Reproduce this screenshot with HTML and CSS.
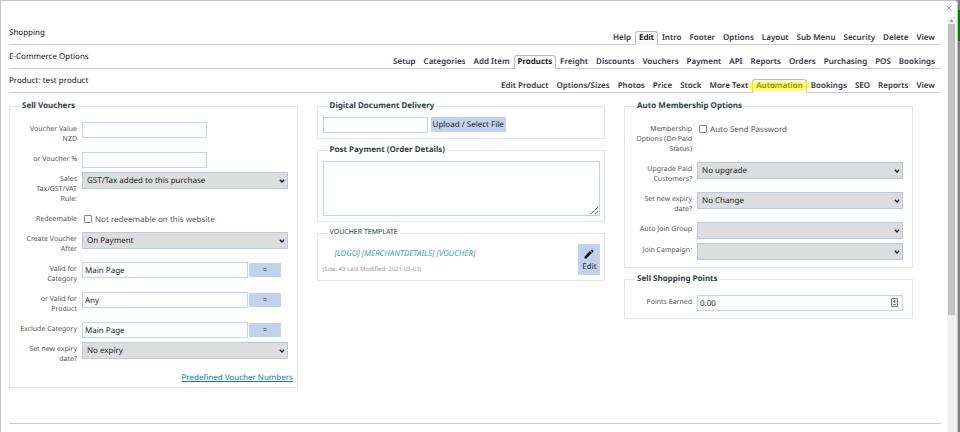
FILE: index.html
```html
<!DOCTYPE html>
<html lang="en">
<head>
    <meta charset="UTF-8">
    <meta name="viewport" content="width=device-width, initial-scale=1.0">
    <title>Product: test product</title>
    <link rel="stylesheet" href="styles.css">
</head>
<body>
    <div class="modal">
        <div class="modal-top">
            <button class="close" type="button" aria-label="Close">
                <svg width="6" height="6" viewBox="0 0 6 6"><path d="M.5 .5l5 5M5.5 .5l-5 5" stroke="#aaa" stroke-width="1" fill="none"/></svg>
            </button>
        </div>

        <div class="modal-body">
            <main class="content">
                <!-- Menus -->
                <header class="bar">
                    <h1>Shopping</h1>
                    <nav class="tabs">
                        <a href="#">Help</a>
                        <a href="#" class="active">Edit</a>
                        <a href="#">Intro</a>
                        <a href="#">Footer</a>
                        <a href="#">Options</a>
                        <a href="#">Layout</a>
                        <a href="#">Sub Menu</a>
                        <a href="#">Security</a>
                        <a href="#">Delete</a>
                        <a href="#">View</a>
                    </nav>
                </header>
                <header class="bar">
                    <h2>E-Commerce Options</h2>
                    <nav class="tabs">
                        <a href="#">Setup</a>
                        <a href="#">Categories</a>
                        <a href="#">Add Item</a>
                        <a href="#" class="active">Products</a>
                        <a href="#">Freight</a>
                        <a href="#">Discounts</a>
                        <a href="#">Vouchers</a>
                        <a href="#">Payment</a>
                        <a href="#">API</a>
                        <a href="#">Reports</a>
                        <a href="#">Orders</a>
                        <a href="#">Purchasing</a>
                        <a href="#">POS</a>
                        <a href="#">Bookings</a>
                    </nav>
                </header>
                <header class="bar">
                    <h2>Product: test product</h2>
                    <nav class="tabs">
                        <a href="#">Edit Product</a>
                        <a href="#">Options/Sizes</a>
                        <a href="#">Photos</a>
                        <a href="#">Price</a>
                        <a href="#">Stock</a>
                        <a href="#">More Text</a>
                        <a href="#" class="active marked">Automation</a>
                        <a href="#">Bookings</a>
                        <a href="#">SEO</a>
                        <a href="#">Reports</a>
                        <a href="#">View</a>
                    </nav>
                </header>

                <form class="columns">
                    <div class="column">
                        <fieldset class="rows">
                            <legend>Sell Vouchers</legend>
                            <div class="row">
                                <label for="value">Voucher Value NZD</label>
                                <input type="text" id="value" class="short">
                            </div>
                            <div class="row">
                                <label for="percent">or Voucher %</label>
                                <input type="text" id="percent" class="short">
                            </div>
                            <div class="row">
                                <label for="tax">Sales Tax/GST/VAT Rule:</label>
                                <select id="tax"><option>GST/Tax added to this purchase</option></select>
                            </div>
                            <div class="row">
                                <span class="label">Redeemable</span>
                                <div class="check">
                                    <input type="checkbox" id="redeem">
                                    <label for="redeem">Not redeemable on this website</label>
                                </div>
                            </div>
                            <div class="row">
                                <label for="create">Create Voucher After</label>
                                <select id="create"><option>On Payment</option></select>
                            </div>
                            <div class="row">
                                <label for="category">Valid for Category</label>
                                <div class="picker">
                                    <input type="text" id="category" value="Main Page">
                                    <button type="button">=</button>
                                </div>
                            </div>
                            <div class="row">
                                <label for="product">or Valid for Product</label>
                                <div class="picker">
                                    <input type="text" id="product" value="Any">
                                    <button type="button">=</button>
                                </div>
                            </div>
                            <div class="row">
                                <label for="exclude">Exclude Category</label>
                                <div class="picker">
                                    <input type="text" id="exclude" value="Main Page">
                                    <button type="button">=</button>
                                </div>
                            </div>
                            <div class="row">
                                <label for="expiry">Set new expiry date?</label>
                                <select id="expiry"><option>No expiry</option></select>
                            </div>
                            <a href="#" class="more">Predefined Voucher Numbers</a>
                        </fieldset>
                    </div>

                    <div class="column">
                        <fieldset>
                            <legend>Digital Document Delivery</legend>
                            <div class="upload">
                                <input type="text" aria-label="Document">
                                <button type="button">Upload / Select File</button>
                            </div>
                        </fieldset>
                        <fieldset>
                            <legend>Post Payment (Order Details)</legend>
                            <textarea aria-label="Post Payment"></textarea>
                        </fieldset>
                        <fieldset class="template">
                            <legend>VOUCHER TEMPLATE</legend>
                            <div class="template-row">
                                <div class="template-text">
                                    <em>[LOGO] [MERCHANTDETAILS] [VOUCHER]</em>
                                    <small>(Size: 49 Last Modified: 2021-05-03)</small>
                                </div>
                                <button type="button" class="edit">
                                    <svg width="12" height="12" viewBox="0 0 24 24"><path d="M3 17.25V21h3.75L17.81 9.94l-3.75-3.75L3 17.25zM20.71 7.04a1 1 0 0 0 0-1.41l-2.34-2.34a1 1 0 0 0-1.41 0l-1.83 1.83 3.75 3.75 1.83-1.83z"/></svg>
                                    Edit
                                </button>
                            </div>
                        </fieldset>
                    </div>

                    <div class="column">
                        <fieldset class="rows">
                            <legend>Auto Membership Options</legend>
                            <div class="row">
                                <span class="label">Membership Options (On Paid Status)</span>
                                <div class="check">
                                    <input type="checkbox" id="password">
                                    <label for="password">Auto Send Password</label>
                                </div>
                            </div>
                            <div class="row">
                                <label for="upgrade">Upgrade Paid Customers?</label>
                                <select id="upgrade"><option>No upgrade</option></select>
                            </div>
                            <div class="row">
                                <label for="change">Set new expiry date?</label>
                                <select id="change"><option>No Change</option></select>
                            </div>
                            <div class="row">
                                <label for="group">Auto Join Group</label>
                                <select id="group"><option></option></select>
                            </div>
                            <div class="row">
                                <label for="campaign">Join Campaign:</label>
                                <select id="campaign"><option></option></select>
                            </div>
                        </fieldset>
                        <fieldset class="rows">
                            <legend>Sell Shopping Points</legend>
                            <div class="row">
                                <label for="points">Points Earned</label>
                                <div class="points">
                                    <input type="text" id="points" value="0.00">
                                    <svg width="7" height="9" viewBox="0 0 7 9"><rect x=".5" y=".5" width="6" height="8" rx=".5" fill="#eee" stroke="#777"/><path d="M3.5 2v3M2.2 3.5h2.6M2 6.5h3" stroke="#666" stroke-width=".8"/></svg>
                                </div>
                            </div>
                        </fieldset>
                    </div>
                </form>
                <hr>
            </main>

            <div class="scrollbar">
                <svg width="9" height="7" viewBox="0 0 9 7"><path d="M2.5 5l2-3 2 3z" fill="#999"/></svg>
                <div class="thumb"></div>
            </div>
        </div>
    </div>
</body>
</html>
```

FILE: styles.css
```css
* {
    box-sizing: border-box;
}

body {
    margin: 0;
    height: 100vh;
    overflow: hidden;
    background: linear-gradient(#7d7f84 10px, #0a7a0a 10px, #0a7a0a 41px, #7d7f84 41px);
    font-family: "Noto Sans", sans-serif;
    font-size: 8px;
    color: #333;
    text-rendering: geometricPrecision;
}

input,
select,
textarea,
button {
    margin: 0;
    font-family: inherit;
    font-size: 8px;
    color: #222;
    text-rendering: inherit;
}

.modal {
    display: flex;
    flex-direction: column;
    height: 100vh;
    margin-right: 2px;
    background-color: #fff;
    border: 1px solid #c4c4c4;
    border-bottom: 0;
    border-top-right-radius: 3px;
}

.modal-top {
    display: flex;
    justify-content: flex-end;
    height: 16px;
    padding: 4px 5px 0 0;
}

.close {
    display: flex;
    height: 6px;
    padding: 0;
    border: 0;
    background: none;
}

.modal-body {
    display: flex;
    flex: 1;
    min-height: 0;
}

.content {
    flex: 1;
    min-width: 0;
    padding: 4px 6px 0 8px;
    overflow: hidden;
}

/* Menus */
.bar {
    display: flex;
    justify-content: space-between;
    align-items: flex-end;
    height: 24px;
    border-bottom: 1px solid #ccc;
}

.bar h1,
.bar h2 {
    align-self: center;
    margin: 0;
    font-size: 8px;
    font-weight: normal;
    line-height: 12px;
    color: #111;
}

.tabs {
    display: flex;
    margin-right: 2px;
}

.tabs a {
    position: relative;
    padding: 0 3px;
    border: 1px solid transparent;
    border-bottom: 0;
    font-size: 8px;
    font-weight: 600;
    line-height: 12px;
    color: #334;
    text-decoration: none;
}

.tabs .active {
    margin-bottom: -1px;
    padding-bottom: 1px;
    border-color: #bbb;
    border-radius: 3px 3px 0 0;
    background-color: #fafafa;
    color: #000;
}

.tabs .marked::after {
    content: '';
    position: absolute;
    inset: 2px -4px 2px;
    border-radius: 2px;
    background-color: rgba(255, 255, 0, 0.55);
}

/* Form */
.columns {
    display: grid;
    grid-template-columns: 31% 31% 31%;
    column-gap: 2%;
    align-items: start;
    margin-top: 7px;
}

.column {
    display: flex;
    flex-direction: column;
    gap: 5px;
}

fieldset {
    min-width: 0;
    margin: 0;
    padding: 5px 4px 5px 5px;
    border: 1px solid #e4e4e4;
}

legend {
    margin-left: 5px;
    padding: 0 2px;
    font-size: 8px;
    font-weight: bold;
    line-height: 12px;
    color: #2f4145;
}

.rows {
    padding: 10px 4px 3px 9px;
}

.rows legend {
    margin-left: 1px;
}

.row {
    display: grid;
    grid-template-columns: 58px 1fr;
    column-gap: 5px;
    align-items: start;
    padding-right: 5px;
}

.row > label,
.label {
    padding: 3px 0 7px;
    font-size: 7px;
    line-height: 10px;
    text-align: right;
    color: #555;
}

input[type="text"] {
    width: 100%;
    height: 16px;
    padding: 0 2px;
    border: 1px solid #c0d5f2;
    background-color: #fff;
}

.row .short {
    width: 125px;
}

select {
    appearance: none;
    width: 100%;
    height: 17px;
    margin-bottom: 4px;
    padding: 0 4px;
    border: 1px solid #b4c9e6;
    border-radius: 0;
    background: #ddd url("data:image/svg+xml,%3Csvg xmlns='http://www.w3.org/2000/svg' width='6' height='4' viewBox='0 0 6 4'%3E%3Cpath d='M.8 .8L3 3 5.2 .8' fill='none' stroke='%23111' stroke-width='1.3'/%3E%3C/svg%3E") no-repeat right 2px center;
}

button {
    border: 0;
    background-color: #c3d2ec;
}

.check {
    display: flex;
    align-items: center;
    gap: 3px;
    height: 14px;
    padding-left: 2px;
    color: #555;
}

.check input {
    appearance: none;
    width: 8px;
    height: 8px;
    border: 1px solid #888;
    border-radius: 1px;
    background-color: #fff;
}

.picker {
    display: flex;
    align-items: center;
    gap: 1px;
}

.picker input[type="text"] {
    width: 166px;
}

.picker button {
    width: 32px;
    height: 14px;
    padding: 0;
    font-size: 7px;
}

.more {
    display: block;
    font-size: 8px;
    line-height: 12px;
    text-align: right;
    color: #1878a8;
}

.upload {
    display: flex;
    gap: 3px;
}

.upload input[type="text"] {
    width: 105px;
}

.upload button {
    height: 15px;
    padding: 0 2px;
}

textarea {
    display: block;
    width: 100%;
    height: 55px;
    border: 1px solid #c0d5f2;
}

.template legend {
    font-size: 7px;
    font-weight: normal;
}

.template-row {
    display: flex;
    justify-content: space-between;
}

.template-text {
    display: flex;
    flex-direction: column;
    gap: 3px;
    padding-top: 4px;
}

.template-text em {
    padding-left: 12px;
    line-height: 12px;
    color: #3ba59d;
}

.template-text small {
    font-size: 6px;
    line-height: 12px;
    color: #999;
}

.edit {
    display: flex;
    flex-direction: column;
    align-items: center;
    justify-content: center;
    gap: 1px;
    width: 22px;
    height: 31px;
    padding: 0;
}

.points {
    position: relative;
}

.points svg {
    position: absolute;
    top: 3px;
    right: 5px;
}

hr {
    margin: 35px 0 0;
    border: 0;
    border-top: 1px solid #ccc;
}

/* Scrollbar */
.scrollbar {
    width: 10px;
    background-color: #f0f0f0;
}

.scrollbar svg {
    display: block;
}

.thumb {
    width: 7px;
    height: 70%;
    margin-left: 1px;
    background-color: #c1c1c1;
}
```
